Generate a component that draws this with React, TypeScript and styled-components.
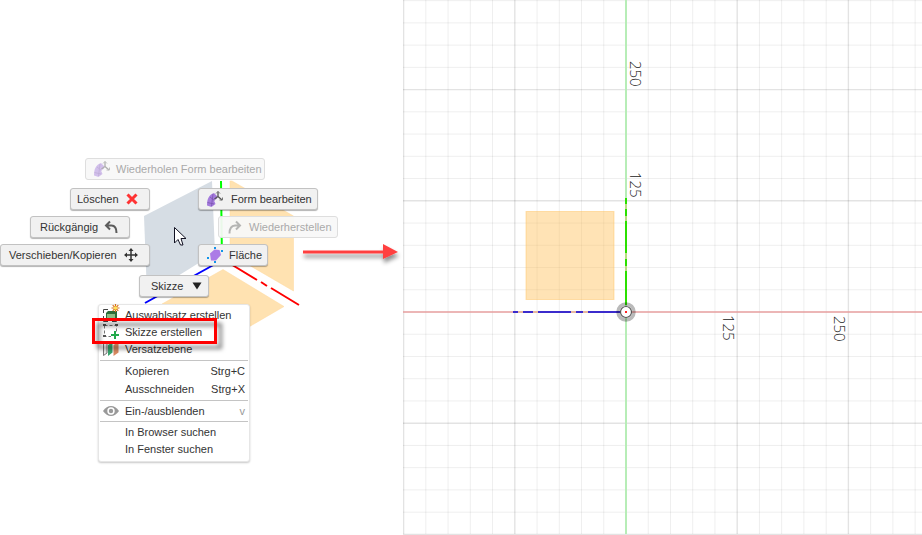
import React from "react";
import styled, { createGlobalStyle, css } from "styled-components";

const GlobalStyle = createGlobalStyle`
  *, *::before, *::after { box-sizing: border-box; }
  body {
    margin: 0;
    background: #fff;
    color: #333;
    font-family: "Liberation Sans", Arial, sans-serif;
    font-size: 11px;
  }
`;

const Page = styled.main`
  display: grid;
  grid-template-columns: 403px minmax(0, 1fr);
  min-height: 100vh;
  overflow: hidden;
`;

const Canvas = styled.section`
  position: relative;
`;

const Scene = styled.svg`
  display: block;
  width: 100%;
  height: 535px;
`;

const SketchView = styled.section`
  min-width: 0;
`;

const AxisLabel = styled.text`
  font-family: "Open Sans", "Noto Sans", sans-serif;
  font-size: 15px;
  font-weight: 300;
  fill: #222;
`;

const MarkingButton = styled.button<{ $x: number; $y: number; $w: number; $start: number; $gap?: number }>`
  position: absolute;
  left: ${(p) => p.$x}px;
  top: ${(p) => p.$y}px;
  width: ${(p) => p.$w}px;
  height: 22px;
  padding: 0 0 0 ${(p) => p.$start}px;
  display: flex;
  align-items: center;
  gap: ${(p) => p.$gap ?? 6}px;
  border: 1px solid #c2c2c2;
  border-radius: 3px;
  background: #f1f1f1;
  box-shadow: 0 1px 1px rgba(0, 0, 0, 0.3);
  color: #333;
  font: inherit;
  line-height: 16px;
  white-space: nowrap;

  svg {
    flex: none;
  }

  ${(p) =>
    p.disabled &&
    css`
      background: rgba(248, 248, 248, 0.94);
      border-color: #dedede;
      box-shadow: none;
      color: #aaa;

      svg {
        opacity: 0.45;
      }
    `}
`;

const ContextMenu = styled.div`
  position: absolute;
  left: 98px;
  top: 304px;
  width: 152px;
  padding: 0 1px 2px;
  border: 1px solid #e6e6e6;
  border-radius: 3px;
  background: #fff;
  box-shadow: 0 1px 2px rgba(0, 0, 0, 0.22);
`;

const MenuGroup = styled.div`
  padding: 1px 0 2px;

  &:first-child {
    padding-bottom: 3px;
  }

  & + & {
    border-top: 1px solid #c4c4c4;
  }
`;

const MenuItem = styled.button<{ $tall?: boolean }>`
  display: grid;
  grid-template-columns: 25px 1fr auto;
  align-items: center;
  width: 100%;
  height: ${(p) => (p.$tall ? 18 : 17)}px;
  padding: 0 3px 0 0;
  border: 0;
  background: none;
  color: #333;
  font: inherit;
  text-align: left;
  white-space: nowrap;

  svg {
    display: block;
    margin-left: 3px;
    overflow: visible;
  }
`;

const Shortcut = styled.span<{ $muted?: boolean }>`
  color: ${(p) => (p.$muted ? "#999" : "#333")};
`;

const Highlight = styled.div`
  position: absolute;
  left: 92px;
  top: 318px;
  width: 125px;
  height: 26px;
  border: 3px solid #f00;
  pointer-events: none;
  filter: drop-shadow(5px 5px 2px rgba(0, 0, 0, 0.5));
`;

const Overlay = styled.svg`
  position: absolute;
  left: 0;
  top: 0;
  width: 403px;
  height: 535px;
  pointer-events: none;
`;

const FormIcon = () => (
  <svg width="18" height="18" viewBox="0 0 18 18" aria-hidden="true">
    <path d="M1 15.500C1 9 3 4.500 8 3L11 6V8.500L8 10.500L9.500 14L5.500 17Z" fill="#a47bdc" />
    <path d="M1.500 12.500L8 14M4 7L8.500 10.500M7 4L5.500 16" fill="none" stroke="#7650ab" strokeWidth="0.7" />
    <path d="M12 1.500V6.500L8.500 9M12 6.500L16 10" fill="none" stroke="#555" strokeWidth="1.300" />
    <path d="M10 3.500L12 1.500L14 3.500M13.500 10H16.500V7.500" fill="none" stroke="#777" />
  </svg>
);

const DeleteIcon = () => (
  <svg width="14" height="14" viewBox="0 0 14 14" aria-hidden="true">
    <path d="M2.500 2.500L11.500 11.500M11.500 2.500L2.500 11.500" stroke="#f33" strokeWidth="3" />
  </svg>
);

const UndoIcon = () => (
  <svg width="14" height="14" viewBox="0 0 14 14" aria-hidden="true">
    <path d="M6 1.500L2 5.500L6 9.500M2 5.500H7.500Q12.500 5.500 12.500 13" fill="none" stroke="#5c5c5c" strokeWidth="2" />
  </svg>
);

const RedoIcon = () => (
  <svg width="14" height="14" viewBox="0 0 14 14" aria-hidden="true">
    <path d="M8 1.500L12 5.500L8 9.500M12 5.500H7Q1.500 6 1.500 13.500" fill="none" stroke="#666" strokeWidth="2" />
  </svg>
);

const MoveIcon = () => (
  <svg width="16" height="16" viewBox="0 0 16 16" aria-hidden="true">
    <path d="M8 2V14M2 8H14" stroke="#333" strokeWidth="1.500" />
    <path d="M8 1L10.500 4H5.500ZM8 15L5.500 12H10.500ZM1 8L4 5.500V10.500ZM15 8L12 10.500V5.500Z" fill="#333" />
  </svg>
);

const FaceIcon = () => (
  <svg width="16" height="16" viewBox="0 0 16 16" aria-hidden="true">
    <path d="M3 6.500L7.500 2.500L12.500 3L14 8L9 13.500L4 13.500Z" fill="#ab7be6" />
    <path d="M7 0H9V2H7ZM14 3H16V5H14ZM0 10H2V12H0ZM7 14H9V16H7Z" fill="#1294e8" />
  </svg>
);

const DropIcon = () => (
  <svg width="10" height="8" viewBox="0 0 10 8" aria-hidden="true">
    <path d="M0.500 0.500H9.500L5 7.500Z" fill="#222" />
  </svg>
);

const SelectionIcon = () => (
  <svg width="18" height="17" viewBox="0 0 18 17" aria-hidden="true">
    <path d="M5 3.500H0.500V7M0.500 10V15.500H5M9 15.500H13.500V14" fill="none" stroke="#444" />
    <path d="M3 7L5 5H14V12L12 14H3Z" fill="#2c6e39" />
    <rect x="4" y="8" width="8" height="5" fill="#8dbd86" />
    <path d="M12.500 -2V6M8.500 2H16.500M9.700 -0.800L15.300 4.800M15.300 -0.800L9.700 4.800" stroke="#d8701c" strokeWidth="1.200" />
    <circle cx="12.500" cy="2" r="1.800" fill="#ffe45a" />
  </svg>
);

const SketchIcon = () => (
  <svg width="18" height="17" viewBox="0 0 18 17" aria-hidden="true">
    <path d="M1.500 2.500H13.500V10M1.500 2.500V13.500H8" fill="none" stroke="#777" strokeDasharray="3 2" />
    <path d="M0 1H3V3H0ZM12 1H15V3H12ZM0 12H3V14H0Z" fill="#555" />
    <path d="M12 8V16M8 12H16" stroke="#22a94b" strokeWidth="2" />
  </svg>
);

const OffsetIcon = () => (
  <svg width="18" height="17" viewBox="0 0 18 17" aria-hidden="true">
    <path d="M0.500 4L4 2V13L0.500 15.500Z" fill="#eee" stroke="#777" />
    <path d="M5 5L9.500 2V12.500L5 16Z" fill="#36a56d" />
    <path d="M10.500 5L15.500 2V12.500L10.500 16Z" fill="#d98a62" />
  </svg>
);

const EyeIcon = () => (
  <svg width="16" height="12" viewBox="0 0 16 12" aria-hidden="true">
    <path d="M0 6Q3.500 1 8 1T16 6Q12.500 11 8 11T0 6Z" fill="#999" />
    <circle cx="8" cy="6" r="3.700" fill="#fff" />
    <circle cx="8" cy="6" r="2.200" fill="#999" />
  </svg>
);

const STEP = 22.24;
const ORIGIN = { x: 223, y: 312 };
const columns = Array.from({ length: 120 }, (_, i) => i - 10);
const rows = Array.from({ length: 25 }, (_, i) => i - 14);

const Grid = () => (
  <Scene role="img" aria-label="Skizzenraster">
    {columns.map((k) => (
      <line
        key={`c${k}`}
        x1={ORIGIN.x + k * STEP}
        x2={ORIGIN.x + k * STEP}
        y1={0}
        y2={534}
        stroke="#000"
        strokeOpacity={k % 5 === 0 ? 0.11 : 0.065}
        strokeWidth={k % 5 === 0 ? 1.4 : 1}
      />
    ))}
    {rows.map((k) => (
      <line
        key={`r${k}`}
        x1={0}
        x2="100%"
        y1={ORIGIN.y + k * STEP}
        y2={ORIGIN.y + k * STEP}
        stroke="#000"
        strokeOpacity={k % 5 === 0 ? 0.11 : 0.065}
        strokeWidth={k % 5 === 0 ? 1.4 : 1}
      />
    ))}
    <rect x="123" y="211.500" width="88" height="88" fill="#ffc05c" fillOpacity="0.45" stroke="#ffc05c" strokeOpacity="0.45" />
    <path d="M223 0V534" stroke="#b7edb7" strokeWidth="2" />
    <path d="M0 312H4000" stroke="#eda5a5" strokeWidth="1.500" />
    <path d="M223 198V305" stroke="#b8dd80" strokeWidth="2" />
    <path d="M110 312H215" stroke="#e8b8a0" strokeWidth="2" />
    <path d="M223 198V204M223 209V216M223 221V253M223 259V266M223 271V305" stroke="#2be000" strokeWidth="2" />
    <path d="M110 312H115M120 312H130M135 312H168M173 312H180M185 312H218" stroke="#3b2bcc" strokeWidth="2" />
    <circle cx="223" cy="312" r="8" fill="none" stroke="#000" strokeOpacity="0.27" strokeWidth="3.500" />
    <circle cx="223" cy="312" r="5.500" fill="#fff" stroke="#555" strokeWidth="1.200" />
    <rect x="222" y="311" width="2" height="2" fill="#f22" />
    <AxisLabel transform="translate(227 61) rotate(90)">250</AxisLabel>
    <AxisLabel transform="translate(227 172) rotate(90)">125</AxisLabel>
    <AxisLabel transform="translate(320 315) rotate(90)">125</AxisLabel>
    <AxisLabel transform="translate(431 316) rotate(90)">250</AxisLabel>
  </Scene>
);

export default function App() {
  return (
    <>
      <GlobalStyle />
      <Page>
        <Canvas>
          <Scene aria-hidden="true">
            <path d="M144 216L212 181L215 253L147 295Z" fill="#d6dde4" />
            <path d="M230 181H232L293.500 216V291L230 254Z" fill="#ffe2b1" stroke="#ffd99c" strokeWidth="0.500" />
            <path d="M223 269.500L284 306.500L223 342L162 304Z" fill="#ffe2b1" stroke="#ffd99c" strokeWidth="0.500" />
            <path d="M221 181L222 262" stroke="#0f0" strokeWidth="2" />
            <path d="M217 263L145 303" stroke="#00f" strokeWidth="2" />
            <path d="M229 263L257 280M261 282L267 286M271 288L299 305" stroke="#f00" strokeWidth="2" />
          </Scene>

          <MarkingButton $x={85} $y={158} $w={180} $start={7} $gap={5} disabled>
            <FormIcon />
            Wiederholen Form bearbeiten
          </MarkingButton>
          <MarkingButton $x={70} $y={188} $w={80} $start={6}>
            Löschen
            <DeleteIcon />
          </MarkingButton>
          <MarkingButton $x={198} $y={188} $w={120} $start={7} $gap={7}>
            <FormIcon />
            Form bearbeiten
          </MarkingButton>
          <MarkingButton $x={30} $y={216} $w={100} $start={9}>
            Rückgängig
            <UndoIcon />
          </MarkingButton>
          <MarkingButton $x={218} $y={216} $w={120} $start={9} $gap={7} disabled>
            <RedoIcon />
            Wiederherstellen
          </MarkingButton>
          <MarkingButton $x={0} $y={244} $w={150} $start={8}>
            Verschieben/Kopieren
            <MoveIcon />
          </MarkingButton>
          <MarkingButton $x={198} $y={244} $w={70} $start={8}>
            <FaceIcon />
            Fläche
          </MarkingButton>
          <MarkingButton $x={139} $y={275} $w={70} $start={11} $gap={9} aria-haspopup="menu">
            Skizze
            <DropIcon />
          </MarkingButton>

          <ContextMenu role="menu" aria-label="Skizze">
            <MenuGroup role="group">
              <MenuItem role="menuitem">
                <SelectionIcon />
                <span>Auswahlsatz erstellen</span>
              </MenuItem>
              <MenuItem role="menuitem">
                <SketchIcon />
                <span>Skizze erstellen</span>
              </MenuItem>
              <MenuItem role="menuitem">
                <OffsetIcon />
                <span>Versatzebene</span>
              </MenuItem>
            </MenuGroup>
            <MenuGroup role="group">
              <MenuItem role="menuitem" $tall>
                <i />
                <span>Kopieren</span>
                <Shortcut>Strg+C</Shortcut>
              </MenuItem>
              <MenuItem role="menuitem" $tall>
                <i />
                <span>Ausschneiden</span>
                <Shortcut>Strg+X</Shortcut>
              </MenuItem>
            </MenuGroup>
            <MenuGroup role="group">
              <MenuItem role="menuitem">
                <EyeIcon />
                <span>Ein-/ausblenden</span>
                <Shortcut $muted>v</Shortcut>
              </MenuItem>
            </MenuGroup>
            <MenuGroup role="group">
              <MenuItem role="menuitem">
                <i />
                <span>In Browser suchen</span>
              </MenuItem>
              <MenuItem role="menuitem">
                <i />
                <span>In Fenster suchen</span>
              </MenuItem>
            </MenuGroup>
          </ContextMenu>
          <Highlight />

          <Overlay aria-hidden="true">
            <defs>
              <filter id="arrowShadow" x="-10%" y="-50%" width="120%" height="250%">
                <feDropShadow dx="1" dy="4" stdDeviation="2" floodOpacity="0.45" />
              </filter>
            </defs>
            <path d="M303 250.500H383V244L398 252L383 259V253.500H303Z" fill="#ff4040" filter="url(#arrowShadow)" />
            <path d="M174.500 227.500V243L178 239.500L180.500 245H183L181 238.500H186Z" fill="#fff" stroke="#112" />
          </Overlay>
        </Canvas>
        <SketchView>
          <Grid />
        </SketchView>
      </Page>
    </>
  );
}
